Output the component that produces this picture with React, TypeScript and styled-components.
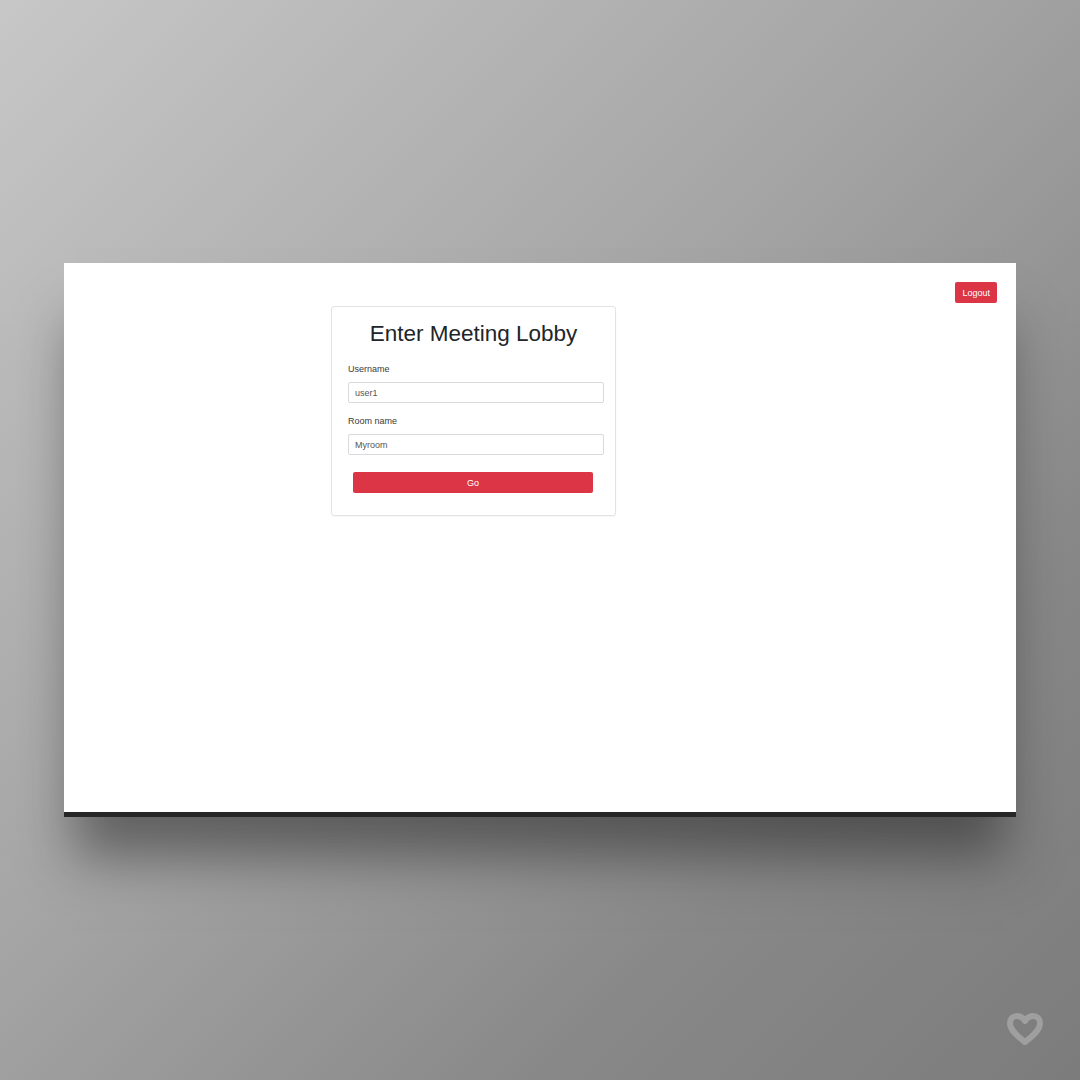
import React from "react";
import styled, { createGlobalStyle } from "styled-components";

const GlobalStyle = createGlobalStyle`
	html,
	body {
		margin: 0;
		padding: 0;
	}
	body {
		font-family: "Liberation Sans", Arial, sans-serif;
	}
`;

const Backdrop = styled.div`
	position: relative;
	width: 1080px;
	height: 1080px;
	overflow: hidden;
	background: linear-gradient(135deg, #c7c7c7 0%, #a4a4a4 45%, #888888 75%, #7c7c7c 100%);
	padding: 263px 64px 0;
	box-sizing: border-box;
`;

const Screen = styled.div`
	width: 952px;
	height: 554px;
	box-sizing: border-box;
	background: #fff;
	border-bottom: 5px solid #272727;
	box-shadow: 0 50px 50px -10px rgba(30, 30, 30, 0.5);
	display: flex;
	flex-direction: column;
`;

const TopBar = styled.div`
	display: flex;
	justify-content: flex-end;
	padding: 19px 19px 0;
	height: 40px;
	box-sizing: border-box;
`;

const RedButton = styled.button<{ $wide?: boolean }>`
	font-family: "Liberation Sans", Arial, sans-serif;
	font-size: 9px;
	color: #fff;
	background: #dc3545;
	border: none;
	border-radius: 2px;
	height: 21px;
	padding: 0 7px;
	cursor: pointer;
	width: ${(p) => (p.$wide ? "240px" : "auto")};
	margin: ${(p) => (p.$wide ? "17px 11px 0 5px" : "0")};
`;

const Card = styled.div`
	width: 285px;
	margin: 3px 0 0 267px;
	box-sizing: border-box;
	border: 1px solid #e3e3e3;
	border-radius: 3px;
	box-shadow: 0 1px 2px rgba(0, 0, 0, 0.04);
	padding: 13px 11px 22px 16px;
	display: flex;
	flex-direction: column;
`;

const Title = styled.h1`
	margin: 0 5px 0 0;
	font-size: 22.5px;
	font-weight: 400;
	line-height: 28px;
	color: #212529;
	text-align: center;
`;

const Label = styled.label<{ $first?: boolean }>`
	display: block;
	font-size: 9px;
	line-height: 12px;
	color: #3a3a3a;
	margin-top: ${(p) => (p.$first ? "15px" : "12px")};
`;

const Input = styled.input`
	font-family: "Liberation Sans", Arial, sans-serif;
	font-size: 9px;
	color: #555;
	height: 21px;
	width: 256px;
	box-sizing: border-box;
	margin-top: 7px;
	padding: 0 6px;
	border: 1px solid #d8dbde;
	border-radius: 2px;
	outline: none;
`;

const Watermark = styled.svg`
	position: absolute;
	right: 35px;
	bottom: 33px;
`;

const App = () => {
	return (
		<>
			<GlobalStyle />
			<Backdrop>
				<Screen>
					<TopBar>
						<RedButton>Logout</RedButton>
					</TopBar>
					<Card>
						<Title>Enter Meeting Lobby</Title>
						<Label $first>Username</Label>
						<Input defaultValue="user1" />
						<Label>Room name</Label>
						<Input defaultValue="Myroom" />
						<RedButton $wide>Go</RedButton>
					</Card>
				</Screen>
				<Watermark width="40" height="36" viewBox="0 0 40 36">
					<path
						d="M20 31 C12 25 5 19 5 12 C5 7.5 8.5 5 12 5 C15.5 5 18 7 20 10 C22 7 24.5 5 28 5 C31.5 5 35 7.5 35 12 C35 19 28 25 20 31 Z"
						fill="none"
						stroke="#9f9f9f"
						strokeWidth="6"
						strokeLinejoin="round"
					/>
				</Watermark>
			</Backdrop>
		</>
	);
};

export default App;
